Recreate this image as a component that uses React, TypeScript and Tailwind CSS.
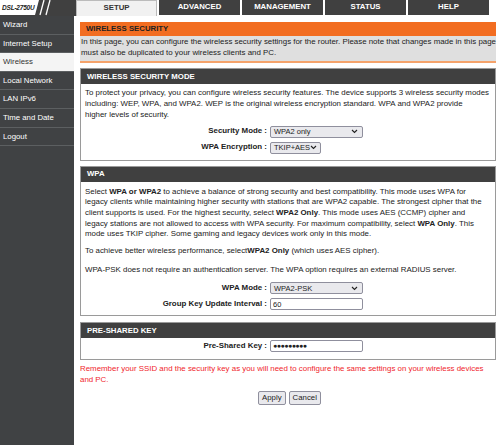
import { useState } from 'react';

const tabs = ['SETUP', 'ADVANCED', 'MANAGEMENT', 'STATUS', 'HELP'];
const navItems = ['Wizard', 'Internet Setup', 'Wireless', 'Local Network', 'LAN IPv6', 'Time and Date', 'Logout'];

function Chevron() {
  return (
    <svg width="7" height="5" viewBox="0 0 7 5" className="shrink-0">
      <path d="M1 1 L3.5 3.5 L6 1" fill="none" stroke="#222" strokeWidth="1.1" />
    </svg>
  );
}

function FakeSelect({ value, width }: { value: string; width: string }) {
  return (
    <div
      className={`${width} h-[12px] flex items-center justify-between pl-[3px] pr-[4px] border border-[#8f8f9d] rounded-[2px] bg-[#e9e9ed] text-[7.5px] leading-none`}
    >
      <span>{value}</span>
      <Chevron />
    </div>
  );
}

function Row({ label, children }: { label: string; children: React.ReactNode }) {
  return (
    <div className="flex items-center h-[16px]">
      <div className="w-[185px] text-right pr-[3px] font-bold">{label} :</div>
      {children}
    </div>
  );
}

function SectionHead({ title }: { title: string }) {
  return (
    <div className="h-[15px] bg-[#404040] text-white font-bold text-[7.8px] flex items-center pl-[6px]">
      {title}
    </div>
  );
}

export default function App() {
  const [active] = useState('Wireless');
  const [groupKey, setGroupKey] = useState('60');

  return (
    <div className="w-[500px] h-[445px] bg-white overflow-hidden font-['Liberation_Sans',Arial,sans-serif] text-[7.9px] leading-[10.7px] text-[#222]">
      {/* top bar */}
      <div className="flex h-[16px]">
        <div className="relative w-[76px] bg-[#404040]">
          <svg width="60" height="16" viewBox="0 0 60 16" className="absolute left-0 top-0">
            <polygon points="0,0 39,0 35,15 0,15" fill="#fff" />
            <line x1="44" y1="0" x2="40" y2="15" stroke="#fff" strokeWidth="1.3" />
            <line x1="50" y1="0" x2="46" y2="15" stroke="#fff" strokeWidth="1.3" />
          </svg>
          <span className="absolute left-[2px] top-[3px] text-[6.5px] leading-[9px] font-bold italic tracking-[-0.2px] text-[#222]">
            DSL-2750U
          </span>
        </div>
        <div className="flex gap-[2px] bg-white">
          {tabs.map((t) =>
            t === 'SETUP' ? (
              <div
                key={t}
                className="w-[81px] h-[16px] bg-[#f1f1f1] border-x border-t border-[#bbb] flex items-center justify-center font-bold text-[7.8px] text-[#333]"
              >
                {t}
              </div>
            ) : (
              <div
                key={t}
                className="w-[81px] h-[15px] bg-[#404040] flex items-center justify-center font-bold text-[7.8px] text-white"
              >
                {t}
              </div>
            )
          )}
        </div>
      </div>

      <div className="flex h-[429px]">
        {/* left nav */}
        <div className="w-[74px] bg-[#404244] border-r-[3px] border-white shrink-0 box-content">
          {navItems.map((n) => (
            <div
              key={n}
              className={`h-[18.6px] flex items-center pl-[3px] pt-[1px] text-[7.8px] border-b border-[#5c5f61] ${
                n === active ? 'bg-[#f4f4f4] text-[#333]' : 'text-white'
              }`}
            >
              {n}
            </div>
          ))}
        </div>
        <div className="w-px bg-[#c8c8c8]" />

        {/* content */}
        <div className="flex-1 pl-[3px] pr-[6px] pt-[6px]">
          <div className="h-[14px] bg-[#f26d21] flex items-center pl-[6px] font-bold text-[7.8px] text-[#222]">
            WIRELESS SECURITY
          </div>
          <div className="bg-[#dfdfdf] border-b-2 border-[#f5a36b] pl-[1px] pt-[1px] pb-[3px]">
            <p className="whitespace-nowrap">
              In this page, you can configure the wireless security settings for the router. Please note that changes
              made in this page
              <br />
              must also be duplicated to your wireless clients and PC.
            </p>
          </div>

          <div className="mt-[5px] border border-[#9a9a9a]">
            <SectionHead title="WIRELESS SECURITY MODE" />
            <div className="pl-[4px] pt-[4px] pb-[4px]">
              <p className="whitespace-nowrap">
                To protect your privacy, you can configure wireless security features. The device supports 3 wireless
                security modes
                <br />
                including: WEP, WPA, and WPA2. WEP is the original wireless encryption standard. WPA and WPA2 provide
                <br />
                higher levels of security.
              </p>
              <div className="mt-[3px]">
                <Row label="Security Mode">
                  <FakeSelect value="WPA2 only" width="w-[93px]" />
                </Row>
                <Row label="WPA Encryption">
                  <FakeSelect value="TKIP+AES" width="w-[51px]" />
                </Row>
              </div>
            </div>
          </div>

          <div className="mt-[5px] border border-[#9a9a9a]">
            <SectionHead title="WPA" />
            <div className="pl-[4px] pt-[5px] pb-[3px]">
              <p className="whitespace-nowrap">
                Select <b>WPA or WPA2</b> to achieve a balance of strong security and best compatibility. This mode uses
                WPA for
                <br />
                legacy clients while maintaining higher security with stations that are WPA2 capable. The strongest
                cipher that the
                <br />
                client supports is used. For the highest security, select <b>WPA2 Only</b>. This mode uses AES (CCMP)
                cipher and
                <br />
                legacy stations are not allowed to access with WPA security. For maximum compatibility, select{' '}
                <b>WPA Only</b>. This
                <br />
                mode uses TKIP cipher. Some gaming and legacy devices work only in this mode.
              </p>
              <p className="mt-[6px] whitespace-nowrap">
                To achieve better wireless performance, select<b>WPA2 Only</b> (which uses AES cipher).
              </p>
              <p className="mt-[8px] whitespace-nowrap">
                WPA-PSK does not require an authentication server. The WPA option requires an external RADIUS server.
              </p>
              <div className="mt-[5px]">
                <Row label="WPA Mode">
                  <FakeSelect value="WPA2-PSK" width="w-[93px]" />
                </Row>
                <Row label="Group Key Update Interval">
                  <input
                    value={groupKey}
                    onChange={(e) => setGroupKey(e.target.value)}
                    className="w-[93px] h-[12px] border border-[#8f8f9d] rounded-[2px] px-[2px] text-[7.5px] outline-none"
                  />
                </Row>
              </div>
            </div>
          </div>

          <div className="mt-[6px] border border-[#9a9a9a]">
            <SectionHead title="PRE-SHARED KEY" />
            <div className="pl-[4px] pt-[0px] pb-[5px]">
              <Row label="Pre-Shared Key">
                <div className="w-[93px] h-[12px] border border-[#8f8f9d] rounded-[2px] px-[2px] flex items-center text-[7px] tracking-[-0.5px]">
                  ●●●●●●●●●
                </div>
              </Row>
            </div>
          </div>

          <p className="mt-[4px] text-[#f0262c] whitespace-nowrap">
            Remember your SSID and the security key as you will need to configure the same settings on your wireless
            devices
            <br />
            and PC.
          </p>

          <div className="mt-[5px] flex justify-center gap-[3px] pl-[3px]">
            <button className="h-[14px] px-[3px] border border-[#8f8f9d] rounded-[2px] bg-[#e9e9ed] text-[7.8px] leading-none">
              Apply
            </button>
            <button className="h-[14px] px-[3px] border border-[#8f8f9d] rounded-[2px] bg-[#e9e9ed] text-[7.8px] leading-none">
              Cancel
            </button>
          </div>
        </div>
      </div>
    </div>
  );
}
